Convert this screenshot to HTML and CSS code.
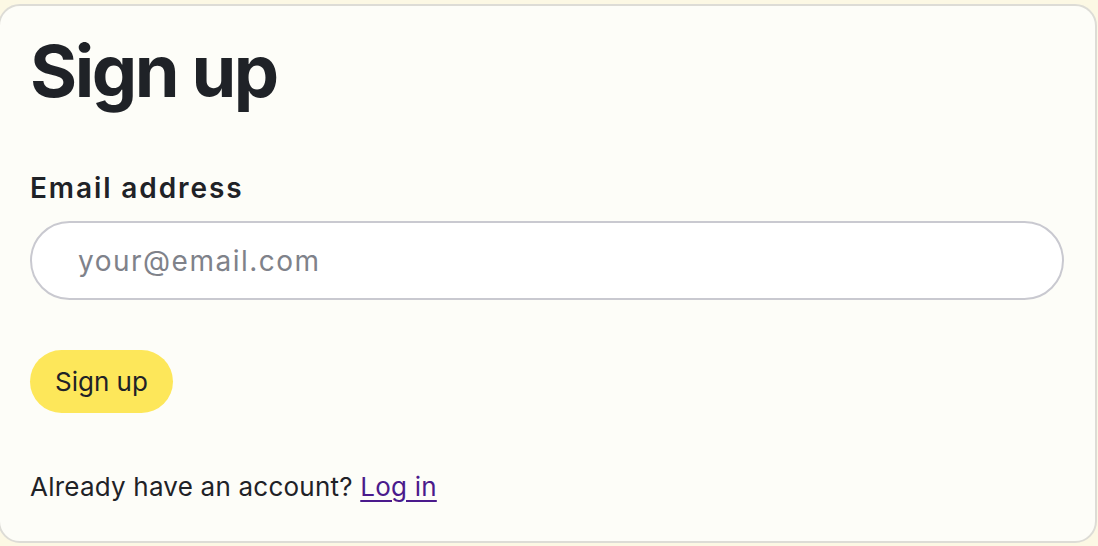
FILE: index.html
```html
<!DOCTYPE html>
<html lang="en">
<head>
<meta charset="utf-8">
<title>Sign up</title>
<link rel="stylesheet" href="styles.css">
</head>
<body>
<main class="card">
  <h1 class="title">Sign up</h1>
  <form class="form">
    <label class="label" for="email">Email address</label>
    <input class="input" id="email" type="email" placeholder="your@email.com">
    <button class="btn" type="button">Sign up</button>
  </form>
  <p class="foot">Already have an account? <a class="link" href="#">Log in</a></p>
</main>
</body>
</html>
```
FILE: styles.css
```css
html, body {
  margin: 0;
  padding: 0;
  background: #fcf8e4;
  height: 100%;
}
body {
  font-family: Inter, "Noto Sans", sans-serif;
  color: #1f2227;
  padding: 4px 1px 3px 0;
  box-sizing: border-box;
}
.card {
  box-sizing: border-box;
  height: 539px;
  margin-left: -2px;
  background: #fdfdf8;
  border: 2px solid #dddcd6;
  border-radius: 22px;
  padding: 20px 30px 0 30px;
}
.title {
  margin: 0;
  font-size: 72px;
  font-weight: 700;
  line-height: 90px;
  letter-spacing: -2.5px;
}
.form {
  display: flex;
  flex-direction: column;
  align-items: flex-start;
  margin-top: 56px;
}
.label {
  font-size: 28px;
  font-weight: 600;
  line-height: 32px;
  letter-spacing: 1.9px;
}
.input {
  box-sizing: border-box;
  margin-top: 17px;
  width: 1034px;
  height: 79px;
  border: 2px solid #c9c9d0;
  border-radius: 40px;
  background: #ffffff;
  padding: 0 46px;
  font-family: inherit;
  font-size: 28px;
  letter-spacing: 1.5px;
  color: #1f2227;
  outline: none;
}
.input::placeholder {
  color: #7f828a;
}
.btn {
  margin-top: 50px;
  height: 63px;
  padding: 0 25px;
  border: none;
  border-radius: 32px;
  background: #fde75a;
  font-family: inherit;
  font-size: 26px;
  color: #1f2227;
}
.foot {
  margin: 58px 0 0 0;
  font-size: 26px;
  line-height: 32px;
  letter-spacing: 0.22px;
}
.link {
  color: #4a1a8c;
  text-decoration: underline;
  text-underline-offset: 4px;
}
```
